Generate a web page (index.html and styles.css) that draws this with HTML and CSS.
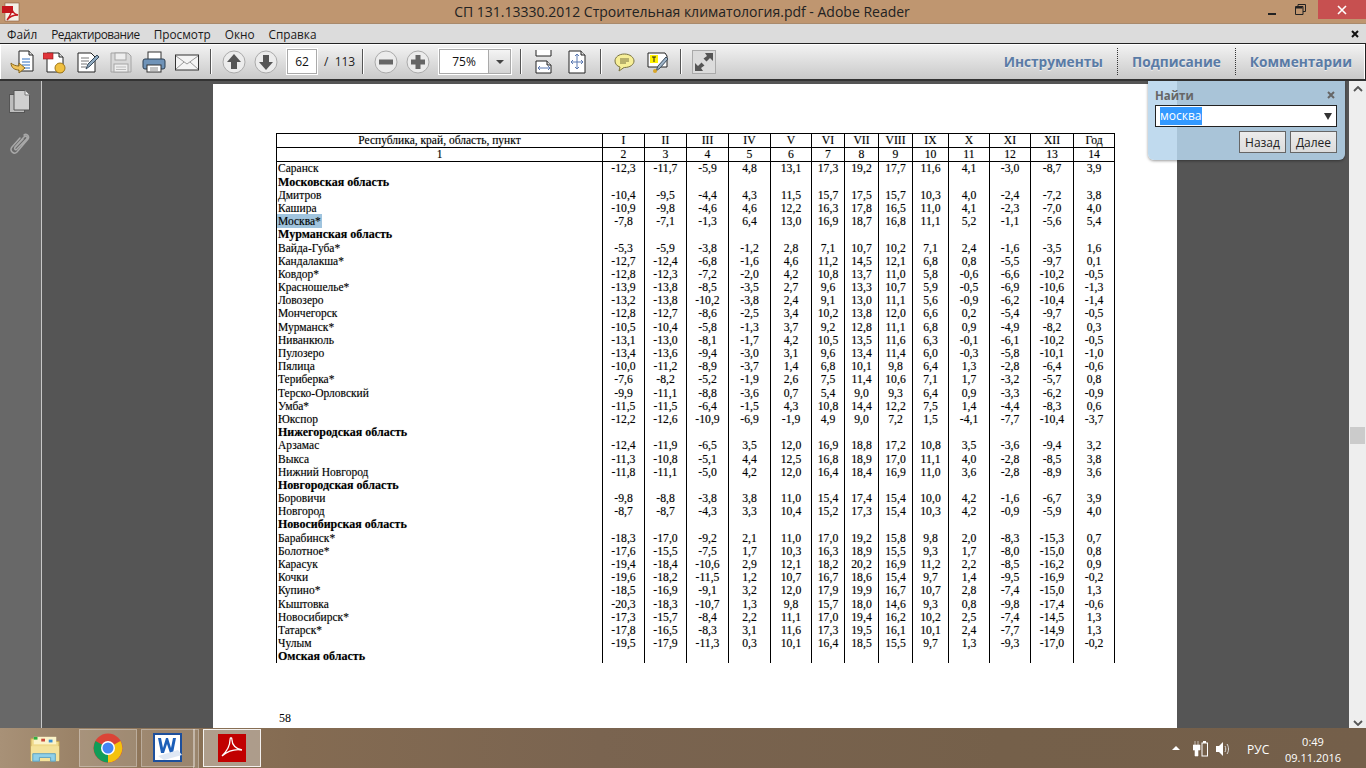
FILE: index.html
```html
<!DOCTYPE html>
<html lang="ru">
<head>
<meta charset="utf-8">
<title>СП 131.13330.2012 Строительная климатология.pdf - Adobe Reader</title>
<link rel="stylesheet" href="styles.css">
</head>
<body>
<header class="titlebar">
  <svg class="app-logo" viewBox="0 0 20 20"><rect x="4" y="1" width="14" height="18" fill="#f4efe6" stroke="#8a5a3c" stroke-width=".6"/><rect x="1" y="4" width="11" height="7" fill="#c4161c"/><path d="M6 18c3-4 5-8 5-12 0 4 2 6 6 7-4 0-8 1-11 5z" fill="none" stroke="#c4161c" stroke-width="1.3"/></svg>
  <span class="title-text">СП 131.13330.2012 Строительная климатология.pdf - Adobe Reader</span>
  <div class="win-btns">
    <svg class="win-min" viewBox="0 0 10 10"><rect x="1" y="6" width="8" height="2" fill="#222"/></svg>
    <svg class="win-max" viewBox="0 0 11 11"><path d="M3 2.5V.5h7.500v7H8M.5 2.500h7.500v8H.5z" fill="none" stroke="#222"/><rect x="1" y="3" width="6.500" height="1.500" fill="#222"/></svg>
    <div class="win-close"><svg viewBox="0 0 10 10"><path d="M1 1l8 8M9 1l-8 8" stroke="#fff" stroke-width="1.600"/></svg></div>
  </div>
</header>
<nav class="menubar">
  <span>Файл</span><span class="menu-tight">Редактирование</span><span>Просмотр</span><span>Окно</span><span>Справка</span>
  <svg class="menu-x" viewBox="0 0 8 8"><path d="M1 1l6 6M7 1L1 7" stroke="#111" stroke-width="2"/></svg>
</nav>
<div class="toolbar">
  <div class="tgroup">
    <svg class="ic" viewBox="0 0 24 24"><path d="M9 1h10l4 4v16H9z" fill="#fff" stroke="#222"/><path d="M19 1v4h4" fill="#ddd" stroke="#222"/><path d="M12 9h8M12 12h8M12 15h8M12 18h8" stroke="#2f6fc0"/><path d="M1 13c0 5 4 7 8 7v3l6-5-6-5v3c-3 0-6-1-8-3z" fill="#f2c45a" stroke="#8a6a20"/></svg>
    <svg class="ic" viewBox="0 0 24 24"><path d="M4 3h12l4 4v15H4z" fill="#fff" stroke="#222"/><path d="M16 3v4h4" fill="#ddd" stroke="#222"/><rect x="0" y="3" width="10" height="6" fill="#e0343a" stroke="#8a1a1a" stroke-width=".6"/><circle cx="17" cy="18" r="5" fill="#f0c040" stroke="#a07818"/></svg>
    <svg class="ic" viewBox="0 0 24 24"><path d="M2 3h13l4 4v15H2z" fill="#fff" stroke="#222"/><path d="M5 8h8M5 11h8M5 14h6M5 17h5" stroke="#777"/><path d="M10 19l2-5 9-9 2 2-9 9z" fill="#8fa9bf" stroke="#3a4c5c"/></svg>
    <svg class="ic" viewBox="0 0 24 24"><path d="M2 3h17l3 3v16H2z" fill="#d8d8d8" stroke="#a4a4a4"/><rect x="6" y="3" width="11" height="7" fill="#eee" stroke="#a4a4a4"/><rect x="5" y="14" width="14" height="8" fill="#eee" stroke="#a4a4a4"/><path d="M7 17h10M7 19.500h10" stroke="#bbb"/></svg>
    <svg class="ic" viewBox="0 0 24 24"><rect x="6" y="2" width="13" height="8" fill="#fff" stroke="#333"/><rect x="1" y="9" width="22" height="10" rx="2" fill="#6f93b8" stroke="#2c3e50"/><rect x="5" y="15" width="14" height="7" fill="#fff" stroke="#333"/><path d="M8 18h8M8 20h8" stroke="#888"/></svg>
    <svg class="ic" viewBox="0 0 24 24"><rect x=".5" y="5" width="23" height="15" fill="#f4f4f4" stroke="#333"/><path d="M1 6l11 8 11-8M1 19l8-7M23 19l-8-7" fill="none" stroke="#999"/></svg>
  </div>
  <i class="sep"></i>
  <div class="tgroup navgap">
    <svg class="ic" viewBox="0 0 24 24"><circle cx="12" cy="12" r="11" fill="#ececec" stroke="#aaa"/><path d="M12 4l7 8h-4v7H9v-7H5z" fill="#555"/></svg>
    <svg class="ic" viewBox="0 0 24 24"><circle cx="12" cy="12" r="11" fill="#ececec" stroke="#aaa"/><path d="M12 20l7-8h-4V5H9v7H5z" fill="#555"/></svg>
  </div>
  <div class="field page-field">62</div>
  <span class="page-total">/&nbsp; 113</span>
  <i class="sep sep-n"></i>
  <div class="tgroup navgap">
    <svg class="ic" viewBox="0 0 24 24"><circle cx="12" cy="12" r="11" fill="#ececec" stroke="#aaa"/><rect x="5" y="9.500" width="14" height="5" fill="#666"/></svg>
    <svg class="ic" viewBox="0 0 24 24"><circle cx="12" cy="12" r="11" fill="#ececec" stroke="#aaa"/><path d="M9.500 5h5v4.500H19v5h-4.500V19h-5v-4.500H5v-5h4.500z" fill="#666"/></svg>
  </div>
  <div class="zoom-box"><span class="zoom-val">75%</span><span class="zoom-arrow"></span></div>
  <i class="sep sep-a"></i>
  <div class="tgroup fitgap">
    <svg class="ic-f" viewBox="0 0 18 24"><path d="M1 0v6h15V0" fill="#fff" stroke="#222"/><path d="M1 11h11l4 4v8H1z" fill="#fff" stroke="#222"/><path d="M12 11v4h4" fill="#ddd" stroke="#222"/><path d="M3 18h12M3 18l2-2M3 18l2 2M15 18l-2-2M15 18l-2 2" fill="none" stroke="#5a78b0"/></svg>
    <svg class="ic-f" viewBox="0 0 18 24"><path d="M1 1h12l4 4v18H1z" fill="#fff" stroke="#222"/><path d="M13 1v4h4" fill="#ddd" stroke="#222"/><path d="M9 4v15M3 12h12M9 4l-2 2M9 4l2 2M9 19l-2-2M9 19l2-2M3 12l2-2M3 12l2 2M15 12l-2-2M15 12l-2 2" fill="none" stroke="#5a78b0"/></svg>
  </div>
  <i class="sep sep-b"></i>
  <div class="tgroup markgap">
    <svg class="ic-m" viewBox="0 0 21 24"><path d="M10.500 4C5 4 1 7 1 11c0 3 2 5 5 6l-1 4 5-3.500h.5c5.500 0 9.500-3 9.500-6.500s-4-7-9.500-7z" fill="#f7ef98" stroke="#7a7340"/><path d="M6 9h9M6 11h9M6 13h6" stroke="#7a7340"/></svg>
    <svg class="ic-m" viewBox="0 0 21 24"><path d="M1 3h17l2 3v11H1z" fill="#fff" stroke="#222"/><rect x="3" y="5" width="8" height="8" fill="#fff200"/><path d="M5 7h4M7 7v5" stroke="#222"/><path d="M9 21l2-5 8-9 2 2-8 9z" fill="#9fb4c8" stroke="#3a4c5c"/><circle cx="8" cy="21" r="2" fill="#d9a62a"/></svg>
  </div>
  <i class="sep sep-c"></i>
  <svg class="ic expand" viewBox="0 0 24 24"><rect x=".5" y=".5" width="23" height="23" fill="#dcdcdc" stroke="#aaa"/><path d="M13 3h8v8l-3-3-3.500 3.500-3-3L15 6zM11 21H3v-8l3 3 3.500-3.500 3 3L9 18z" fill="#555"/></svg>
  <div class="tools">
    <span>Инструменты</span><i class="dots"></i><span>Подписание</span><i class="dots"></i><span>Комментарии</span>
  </div>
</div>
<main class="main">
  <aside class="sidebar">
    <svg class="side-pages" viewBox="0 0 21 23"><rect x=".5" y="4.500" width="15" height="18" fill="#bdbdbd" stroke="#555"/><path d="M5 .5h11l4.500 4.500v15H5z" fill="#cfcfcf" stroke="#555"/><path d="M16 .5V5h4.500" fill="#eee" stroke="#777"/></svg>
    <svg class="side-clip" viewBox="0 0 21 23"><path d="M6 15L15 5c2-2 4 0 2.500 2L8 17c-1.500 1.500-3 0-2-1.500L14 7M15 3c2-2 6 1 4 4L8 20c-3 3-8-1-5-5L11 6" fill="none" stroke="#a8a8a8" stroke-width="1.500" stroke-linecap="round"/></svg>
  </aside>
  <section class="doc">
    <article class="page">
      <table class="climate">
        <colgroup><col class="c0"><col class="c42"><col class="c42"><col class="c42"><col class="c42"><col class="c41"><col class="c33"><col class="c34"><col class="c34"><col class="c36"><col class="c41"><col class="c41"><col class="c43"><col class="c42"></colgroup>
        <thead>
          <tr class="h1"><th>Республика, край, область, пункт</th><th>I</th><th>II</th><th>III</th><th>IV</th><th>V</th><th>VI</th><th>VII</th><th>VIII</th><th>IX</th><th>X</th><th>XI</th><th>XII</th><th>Год</th></tr>
          <tr class="h2"><th>1</th><th>2</th><th>3</th><th>4</th><th>5</th><th>6</th><th>7</th><th>8</th><th>9</th><th>10</th><th>11</th><th>12</th><th>13</th><th>14</th></tr>
        </thead>
        <tbody>
          <tr><td>Саранск</td><td>-12,3</td><td>-11,7</td><td>-5,9</td><td>4,8</td><td>13,1</td><td>17,3</td><td>19,2</td><td>17,7</td><td>11,6</td><td>4,1</td><td>-3,0</td><td>-8,7</td><td>3,9</td></tr>
          <tr><td><b>Московская область</b></td><td></td><td></td><td></td><td></td><td></td><td></td><td></td><td></td><td></td><td></td><td></td><td></td><td></td></tr>
          <tr><td>Дмитров</td><td>-10,4</td><td>-9,5</td><td>-4,4</td><td>4,3</td><td>11,5</td><td>15,7</td><td>17,5</td><td>15,7</td><td>10,3</td><td>4,0</td><td>-2,4</td><td>-7,2</td><td>3,8</td></tr>
          <tr><td>Кашира</td><td>-10,9</td><td>-9,8</td><td>-4,6</td><td>4,6</td><td>12,2</td><td>16,3</td><td>17,8</td><td>16,5</td><td>11,0</td><td>4,1</td><td>-2,3</td><td>-7,0</td><td>4,0</td></tr>
          <tr><td><mark>Москва*</mark></td><td>-7,8</td><td>-7,1</td><td>-1,3</td><td>6,4</td><td>13,0</td><td>16,9</td><td>18,7</td><td>16,8</td><td>11,1</td><td>5,2</td><td>-1,1</td><td>-5,6</td><td>5,4</td></tr>
          <tr><td><b>Мурманская область</b></td><td></td><td></td><td></td><td></td><td></td><td></td><td></td><td></td><td></td><td></td><td></td><td></td><td></td></tr>
          <tr><td>Вайда-Губа*</td><td>-5,3</td><td>-5,9</td><td>-3,8</td><td>-1,2</td><td>2,8</td><td>7,1</td><td>10,7</td><td>10,2</td><td>7,1</td><td>2,4</td><td>-1,6</td><td>-3,5</td><td>1,6</td></tr>
          <tr><td>Кандалакша*</td><td>-12,7</td><td>-12,4</td><td>-6,8</td><td>-1,6</td><td>4,6</td><td>11,2</td><td>14,5</td><td>12,1</td><td>6,8</td><td>0,8</td><td>-5,5</td><td>-9,7</td><td>0,1</td></tr>
          <tr><td>Ковдор*</td><td>-12,8</td><td>-12,3</td><td>-7,2</td><td>-2,0</td><td>4,2</td><td>10,8</td><td>13,7</td><td>11,0</td><td>5,8</td><td>-0,6</td><td>-6,6</td><td>-10,2</td><td>-0,5</td></tr>
          <tr><td>Красношелье*</td><td>-13,9</td><td>-13,8</td><td>-8,5</td><td>-3,5</td><td>2,7</td><td>9,6</td><td>13,3</td><td>10,7</td><td>5,9</td><td>-0,5</td><td>-6,9</td><td>-10,6</td><td>-1,3</td></tr>
          <tr><td>Ловозеро</td><td>-13,2</td><td>-13,8</td><td>-10,2</td><td>-3,8</td><td>2,4</td><td>9,1</td><td>13,0</td><td>11,1</td><td>5,6</td><td>-0,9</td><td>-6,2</td><td>-10,4</td><td>-1,4</td></tr>
          <tr><td>Мончегорск</td><td>-12,8</td><td>-12,7</td><td>-8,6</td><td>-2,5</td><td>3,4</td><td>10,2</td><td>13,8</td><td>12,0</td><td>6,6</td><td>0,2</td><td>-5,4</td><td>-9,7</td><td>-0,5</td></tr>
          <tr><td>Мурманск*</td><td>-10,5</td><td>-10,4</td><td>-5,8</td><td>-1,3</td><td>3,7</td><td>9,2</td><td>12,8</td><td>11,1</td><td>6,8</td><td>0,9</td><td>-4,9</td><td>-8,2</td><td>0,3</td></tr>
          <tr><td>Ниванкюль</td><td>-13,1</td><td>-13,0</td><td>-8,1</td><td>-1,7</td><td>4,2</td><td>10,5</td><td>13,5</td><td>11,6</td><td>6,3</td><td>-0,1</td><td>-6,1</td><td>-10,2</td><td>-0,5</td></tr>
          <tr><td>Пулозеро</td><td>-13,4</td><td>-13,6</td><td>-9,4</td><td>-3,0</td><td>3,1</td><td>9,6</td><td>13,4</td><td>11,4</td><td>6,0</td><td>-0,3</td><td>-5,8</td><td>-10,1</td><td>-1,0</td></tr>
          <tr><td>Пялица</td><td>-10,0</td><td>-11,2</td><td>-8,9</td><td>-3,7</td><td>1,4</td><td>6,8</td><td>10,1</td><td>9,8</td><td>6,4</td><td>1,3</td><td>-2,8</td><td>-6,4</td><td>-0,6</td></tr>
          <tr><td>Териберка*</td><td>-7,6</td><td>-8,2</td><td>-5,2</td><td>-1,9</td><td>2,6</td><td>7,5</td><td>11,4</td><td>10,6</td><td>7,1</td><td>1,7</td><td>-3,2</td><td>-5,7</td><td>0,8</td></tr>
          <tr><td>Терско-Орловский</td><td>-9,9</td><td>-11,1</td><td>-8,8</td><td>-3,6</td><td>0,7</td><td>5,4</td><td>9,0</td><td>9,3</td><td>6,4</td><td>0,9</td><td>-3,3</td><td>-6,2</td><td>-0,9</td></tr>
          <tr><td>Умба*</td><td>-11,5</td><td>-11,5</td><td>-6,4</td><td>-1,5</td><td>4,3</td><td>10,8</td><td>14,4</td><td>12,2</td><td>7,5</td><td>1,4</td><td>-4,4</td><td>-8,3</td><td>0,6</td></tr>
          <tr><td>Юкспор</td><td>-12,2</td><td>-12,6</td><td>-10,9</td><td>-6,9</td><td>-1,9</td><td>4,9</td><td>9,0</td><td>7,2</td><td>1,5</td><td>-4,1</td><td>-7,7</td><td>-10,4</td><td>-3,7</td></tr>
          <tr><td><b>Нижегородская область</b></td><td></td><td></td><td></td><td></td><td></td><td></td><td></td><td></td><td></td><td></td><td></td><td></td><td></td></tr>
          <tr><td>Арзамас</td><td>-12,4</td><td>-11,9</td><td>-6,5</td><td>3,5</td><td>12,0</td><td>16,9</td><td>18,8</td><td>17,2</td><td>10,8</td><td>3,5</td><td>-3,6</td><td>-9,4</td><td>3,2</td></tr>
          <tr><td>Выкса</td><td>-11,3</td><td>-10,8</td><td>-5,1</td><td>4,4</td><td>12,5</td><td>16,8</td><td>18,9</td><td>17,0</td><td>11,1</td><td>4,0</td><td>-2,8</td><td>-8,5</td><td>3,8</td></tr>
          <tr><td>Нижний Новгород</td><td>-11,8</td><td>-11,1</td><td>-5,0</td><td>4,2</td><td>12,0</td><td>16,4</td><td>18,4</td><td>16,9</td><td>11,0</td><td>3,6</td><td>-2,8</td><td>-8,9</td><td>3,6</td></tr>
          <tr><td><b>Новгородская область</b></td><td></td><td></td><td></td><td></td><td></td><td></td><td></td><td></td><td></td><td></td><td></td><td></td><td></td></tr>
          <tr><td>Боровичи</td><td>-9,8</td><td>-8,8</td><td>-3,8</td><td>3,8</td><td>11,0</td><td>15,4</td><td>17,4</td><td>15,4</td><td>10,0</td><td>4,2</td><td>-1,6</td><td>-6,7</td><td>3,9</td></tr>
          <tr><td>Новгород</td><td>-8,7</td><td>-8,7</td><td>-4,3</td><td>3,3</td><td>10,4</td><td>15,2</td><td>17,3</td><td>15,4</td><td>10,3</td><td>4,2</td><td>-0,9</td><td>-5,9</td><td>4,0</td></tr>
          <tr><td><b>Новосибирская область</b></td><td></td><td></td><td></td><td></td><td></td><td></td><td></td><td></td><td></td><td></td><td></td><td></td><td></td></tr>
          <tr><td>Барабинск*</td><td>-18,3</td><td>-17,0</td><td>-9,2</td><td>2,1</td><td>11,0</td><td>17,0</td><td>19,2</td><td>15,8</td><td>9,8</td><td>2,0</td><td>-8,3</td><td>-15,3</td><td>0,7</td></tr>
          <tr><td>Болотное*</td><td>-17,6</td><td>-15,5</td><td>-7,5</td><td>1,7</td><td>10,3</td><td>16,3</td><td>18,9</td><td>15,5</td><td>9,3</td><td>1,7</td><td>-8,0</td><td>-15,0</td><td>0,8</td></tr>
          <tr><td>Карасук</td><td>-19,4</td><td>-18,4</td><td>-10,6</td><td>2,9</td><td>12,1</td><td>18,2</td><td>20,2</td><td>16,9</td><td>11,2</td><td>2,2</td><td>-8,5</td><td>-16,2</td><td>0,9</td></tr>
          <tr><td>Кочки</td><td>-19,6</td><td>-18,2</td><td>-11,5</td><td>1,2</td><td>10,7</td><td>16,7</td><td>18,6</td><td>15,4</td><td>9,7</td><td>1,4</td><td>-9,5</td><td>-16,9</td><td>-0,2</td></tr>
          <tr><td>Купино*</td><td>-18,5</td><td>-16,9</td><td>-9,1</td><td>3,2</td><td>12,0</td><td>17,9</td><td>19,9</td><td>16,7</td><td>10,7</td><td>2,8</td><td>-7,4</td><td>-15,0</td><td>1,3</td></tr>
          <tr><td>Кыштовка</td><td>-20,3</td><td>-18,3</td><td>-10,7</td><td>1,3</td><td>9,8</td><td>15,7</td><td>18,0</td><td>14,6</td><td>9,3</td><td>0,8</td><td>-9,8</td><td>-17,4</td><td>-0,6</td></tr>
          <tr><td>Новосибирск*</td><td>-17,3</td><td>-15,7</td><td>-8,4</td><td>2,2</td><td>11,1</td><td>17,0</td><td>19,4</td><td>16,2</td><td>10,2</td><td>2,5</td><td>-7,4</td><td>-14,5</td><td>1,3</td></tr>
          <tr><td>Татарск*</td><td>-17,8</td><td>-16,5</td><td>-8,3</td><td>3,1</td><td>11,6</td><td>17,3</td><td>19,5</td><td>16,1</td><td>10,1</td><td>2,4</td><td>-7,7</td><td>-14,9</td><td>1,3</td></tr>
          <tr><td>Чулым</td><td>-19,5</td><td>-17,9</td><td>-11,3</td><td>0,3</td><td>10,1</td><td>16,4</td><td>18,5</td><td>15,5</td><td>9,7</td><td>1,3</td><td>-9,3</td><td>-17,0</td><td>-0,2</td></tr>
          <tr><td><b>Омская область</b></td><td></td><td></td><td></td><td></td><td></td><td></td><td></td><td></td><td></td><td></td><td></td><td></td><td></td></tr>
        </tbody>
      </table>
      <div class="page-num">58</div>
    </article>
  </section>
  <div class="scrollbar">
    <svg class="sb-arrow" viewBox="0 0 10 6"><path d="M1 5l4-4 4 4" fill="none" stroke="#555" stroke-width="1.800"/></svg>
    <div class="sb-thumb"></div>
    <svg class="sb-arrow" viewBox="0 0 10 6"><path d="M1 1l4 4 4-4" fill="none" stroke="#555" stroke-width="1.800"/></svg>
  </div>
  <div class="find">
    <div class="find-head"><span>Найти</span><svg class="find-x" viewBox="0 0 8 8"><path d="M1 1l6 6M7 1L1 7" stroke="#666" stroke-width="2"/></svg></div>
    <div class="find-input"><span class="find-sel">москва</span><i class="find-arrow"></i></div>
    <div class="find-btns"><button class="find-btn">Назад</button><button class="find-btn">Далее</button></div>
  </div>
</main>
<footer class="taskbar">
  <div class="task-slot">
    <svg class="tk-ic" viewBox="0 0 32 30"><path d="M1 4h10l3 3h17v20H1z" fill="#efd98a" stroke="#c8a850"/><rect x="4" y="2" width="24" height="8" fill="#fbf3c8"/><rect x="4" y="2" width="4" height="3" fill="#2fae3f"/><rect x="12" y="4" width="4" height="3" fill="#c84a3a"/><rect x="20" y="5" width="4" height="3" fill="#3a8fd0"/><path d="M1 12h30v16H1z" fill="#f4e29a"/><path d="M3 28v-8h24v8h-5v-4H10v4z" fill="#8fd0e8" stroke="#5aa0c0"/></svg>
  </div>
  <div class="task-btn">
    <svg class="tk-ic" viewBox="0 0 30 30"><circle cx="15" cy="15" r="14.500" fill="#db4437"/><path d="M15 15L27.500 8A14.500 14.500 0 0 1 15 29.500z" fill="#f4c20d"/><path d="M15 15L15 29.500A14.500 14.500 0 0 1 2.500 8z" fill="#0f9d58"/><circle cx="15" cy="15" r="7" fill="#fff"/><circle cx="15" cy="15" r="5.500" fill="#4285f4"/></svg>
  </div>
  <div class="task-btn task-stack">
    <svg class="tk-ic" viewBox="0 0 30 30"><rect x="1" y="1" width="27" height="27" fill="#fff" stroke="#1d4f9c" stroke-width="2"/><path d="M5 5l3 15h3l3-9 3 9h3l3-15h-3l-2 10-3-10h-2l-3 10-2-10z" fill="#1d5fb8"/><path d="M5 23l20-6 4 5-18 5z" fill="#dfe8f4"/></svg>
  </div>
  <div class="task-btn task-active">
    <svg class="tk-ad" viewBox="0 0 28 28"><rect width="28" height="28" fill="#c10000"/><path d="M4 22c5-5 8-11 8-16 0-3 2-3 2 0 0 5 4 9 10 10-6-1-14 1-20 6z" fill="none" stroke="#fff" stroke-width="1.300"/></svg>
  </div>
  <div class="tray">
    <i class="tray-caret"></i>
    <svg class="tray-pw" viewBox="0 0 15 16"><path d="M2 0v4M5 0v4M0 4h7v5H5v6H2V9H0z" fill="#fff" stroke="#fff" stroke-width=".6"/><rect x="9" y="2" width="5.500" height="13" fill="none" stroke="#fff"/><rect x="10" y="0" width="3" height="2" fill="#fff"/></svg>
    <svg class="tray-sp" viewBox="0 0 15 16"><path d="M0 5h3l4-4v14l-4-4H0z" fill="#fff"/><path d="M9 5c1 2 1 4 0 6M11 3c2 3 2 7 0 10" fill="none" stroke="#ddd"/></svg>
    <span class="tray-lang">РУС</span>
    <div class="tray-clock"><span>0:49</span><span>09.11.2016</span></div>
  </div>
</footer>
</body>
</html>
```
FILE: styles.css
```css
* { box-sizing: border-box; }
html, body { margin: 0; padding: 0; }
body {
  width: 1366px; height: 768px; overflow: hidden;
  display: flex; flex-direction: column;
  font-family: "Open Sans", "Noto Sans", sans-serif;
  position: relative;
}
.titlebar {
  height: 23px; background: #bf9670; display: flex; align-items: center;
  justify-content: center; position: relative; flex: none;
}
.app-logo { position: absolute; left: 1px; top: 2px; width: 20px; height: 20px; }
.title-text { font-size: 14px; color: #222; margin-right: 2px; }
.win-btns { position: absolute; right: 0; top: 0; display: flex; align-items: flex-start; }
.win-min { width: 10px; height: 10px; margin: 7px 18px 0 0; }
.win-max { width: 11px; height: 11px; margin: 4px 12px 0 0; }
.win-close { width: 48px; height: 19px; background: #c75050; display: flex; align-items: center; justify-content: center; }
.win-close svg { width: 10px; height: 10px; }
.menubar {
  height: 20px; background: #dcdcdc; border-top: 1px solid #a98a6c;
  display: flex; align-items: center; padding-left: 7px; gap: 14px;
  font-size: 11.800px; color: #1a1a1a; position: relative; flex: none;
}
.menu-tight { letter-spacing: -.5px; }
.menu-x { position: absolute; right: 7px; top: 6px; width: 8px; height: 8px; }
.toolbar {
  height: 38px; flex: none; display: flex; align-items: center;
  padding-left: 10px;
  border-top: 1px solid #222; border-bottom: 2px solid #333; border-right: 1px solid #222;
  box-shadow: inset 0 1px 0 #fff, inset 1px 0 0 #fff, inset -1px 0 0 #fff;
  background: linear-gradient(#f3f3f3, #c9c9c9);
}
.tgroup { display: flex; align-items: center; gap: 9px; }
.ic { width: 24px; height: 24px; flex: none; }
.ic-f { width: 18px; height: 24px; flex: none; }
.ic-m { width: 21px; height: 24px; flex: none; }
.sep { width: 1px; height: 25px; background: #555; box-shadow: 1px 0 0 #fff; margin: 0 11px; flex: none; }
.sep-n { margin-left: 0; }
.navgap { gap: 8px; }
.field, .zoom-box { background: #fff; border: 1px solid #aaa; box-shadow: 0 0 0 1px #fff; }
.page-field { width: 30px; height: 25px; margin-left: 9px; font-size: 12px; display: flex; align-items: center; justify-content: center; color: #111; }
.page-total { width: 45px; padding-left: 7px; font-size: 12px; color: #222; flex: none; }
.zoom-box { width: 72px; height: 25px; margin-left: 9px; display: flex; font-size: 12px; }
.zoom-val { width: 49px; display: flex; align-items: center; justify-content: center; color: #111; border-right: 1px solid #aaa; }
.zoom-arrow { flex: 1; background: linear-gradient(#f4f4f4, #d4d4d4); position: relative; }
.zoom-arrow::after { content: ""; position: absolute; left: 7px; top: 10px; border: 4px solid transparent; border-top: 4px solid #444; border-bottom: 0; }
.sep-a { margin: 0 14px 0 9px; }
.fitgap { gap: 15px; }
.sep-b { margin: 0 13px 0 14px; }
.markgap { gap: 12px; }
.sep-c { margin: 0 11px 0 12px; }
.tools {
  margin-left: auto; display: flex; align-items: center; height: 28px;
  font-size: 13.700px; font-weight: 700; color: #5a7ba6; text-shadow: 0 1px 0 #eee;
  padding-right: 13px; white-space: nowrap;
}
.dots { height: 27px; width: 0; border-left: 1px dotted #333; margin: 0 14px; }
.main { flex: 1; display: flex; position: relative; min-height: 0; }
.sidebar { width: 42px; flex: none; background: #686868; border-right: 1px solid #c8c8c8; display: flex; flex-direction: column; align-items: center; padding-top: 9px; gap: 19px; padding-right: 2px; }
.side-pages, .side-clip { width: 21px; height: 23px; }
.doc { flex: 1; background: #555; padding: 3px 0 0 171px; overflow: hidden; }
.page { width: 964px; height: 645px; background: #fff; padding: 49px 0 0 63px; }
.climate {
  border-collapse: separate; border-spacing: 0; table-layout: fixed; width: 839px;
  font-family: "Liberation Serif", "Times New Roman", serif; font-size: 11.700px; color: #000;
  text-shadow: 0 0 1px rgba(0,0,0,.3);
}
.c0 { width: 326px; } .c42 { width: 42px; } .c41 { width: 41px; } .c33 { width: 33px; }
.c34 { width: 34px; } .c36 { width: 36px; } .c43 { width: 43px; }
.climate th, .climate td { padding: 0; border-left: 1px solid #000; text-align: center; font-weight: 400; line-height: 13px; white-space: nowrap; }
.climate th:last-child, .climate td:last-child { border-right: 1px solid #000; }
.h1 th { height: 14px; border-top: 1px solid #000; }
.h2 th { height: 15.300px; border-top: 1px solid #000; border-bottom: 1px solid #000; }
.climate td { height: 13.190px; }
.climate th:first-child { font-size: 11.500px; }
.climate td:first-child { text-align: left; padding-left: 1px; font-size: 11.500px; }
.climate b { font-weight: 700; font-size: 12px; margin-left: 0; }
mark { background: #a0c4de; color: #000; box-shadow: 0 0 0 1px #a0c4de; }
.page-num { font-family: "Liberation Serif", serif; font-size: 12px; color: #000; margin: 48px 0 0 3px; line-height: 14px; }
.scrollbar { width: 17px; flex: none; background: #eee; display: flex; flex-direction: column; align-items: center; position: relative; padding-top: 5px; }
.sb-arrow { width: 10px; height: 6px; flex: none; }
.sb-thumb { width: 15px; height: 17px; background: #cbcbcb; margin: 335px 0 276px; flex: none; }
.find {
  position: absolute; left: 1148px; top: 0; width: 197px; height: 79px;
  background: linear-gradient(90deg, #c0daee 29px, #a9c4d8 29px);
  border-radius: 0 0 6px 6px; box-shadow: 0 1px 3px rgba(0,0,0,.4);
  padding: 4px 8px 0 7px;
}
.find-head { display: flex; justify-content: space-between; align-items: center; font-size: 11.500px; font-weight: 700; color: #666; height: 20px; }
.find-x { width: 8px; height: 8px; margin-right: 2px; }
.find-input { height: 22px; background: #fff; border: 1px solid #222; display: flex; align-items: center; padding-left: 4px; font-size: 12px; position: relative; }
.find-sel { background: #3399ff; color: #fff; line-height: 18px; }
.find-arrow { position: absolute; right: 4px; top: 7px; border: 4.500px solid transparent; border-top: 7px solid #333; border-bottom: 0; }
.find-btns { display: flex; justify-content: flex-end; gap: 4px; margin-top: 4px; }
.find-btn { width: 47px; height: 22px; border: 1px solid #666; background: linear-gradient(#ececec, #dcdcdc); font: 12px "Open Sans", sans-serif; color: #222; padding: 0; }
.taskbar {
  height: 40px; flex: none; display: flex; align-items: center; padding-left: 79px; gap: 4px; position: relative;
  background: linear-gradient(90deg, #a89177 0, #8d7458 150px, #846b52 300px, #7a6450 600px, #75604a 1000px, #745f4a 1366px);
}
.task-slot { position: absolute; left: 30px; top: 6px; }
.task-btn { width: 58px; height: 38px; border: 1px solid rgba(255,255,255,.3); background: rgba(255,255,255,.14); display: flex; align-items: center; justify-content: center; }
.task-stack { position: relative; width: 54px; margin-right: 4px; }
.task-stack::after { content: ""; position: absolute; right: -5px; top: -1px; width: 4px; height: 38px; border: 1px solid rgba(255,255,255,.3); background: rgba(255,255,255,.14); }
.task-active { background: rgba(255,255,255,.32); border-color: rgba(255,255,255,.85); }
.tk-ic { width: 30px; height: 30px; display: block; }
.tk-ad { width: 28px; height: 28px; }
.tray { position: absolute; right: 0; top: 0; height: 40px; width: 198px; color: #fff; font-size: 12px; }
.tray-caret { position: absolute; left: 4px; top: 18px; border: 4px solid transparent; border-bottom: 4px solid #fff; border-top: 0; }
.tray-pw { position: absolute; left: 25px; top: 13px; width: 15px; height: 16px; }
.tray-sp { position: absolute; left: 48px; top: 13px; width: 15px; height: 16px; }
.tray-lang { position: absolute; left: 79px; top: 13px; }
.tray-clock { position: absolute; left: 118px; top: 6px; width: 54px; display: flex; flex-direction: column; align-items: center; line-height: 16px; font-size: 11px; }
```
